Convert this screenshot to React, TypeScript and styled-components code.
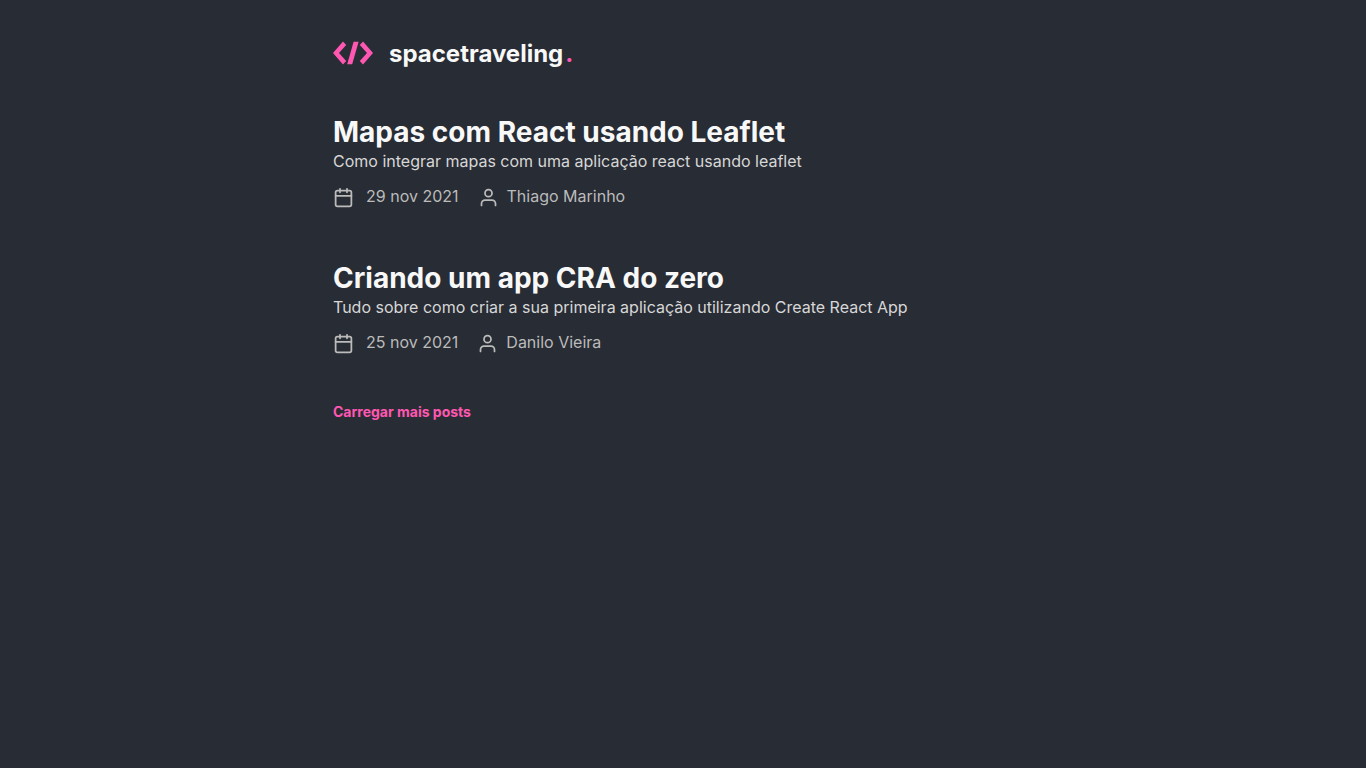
import React from 'react';
import styled, { createGlobalStyle } from 'styled-components';
import { FiCalendar, FiUser } from 'react-icons/fi';

const GlobalStyle = createGlobalStyle`
  * { margin: 0; padding: 0; box-sizing: border-box; }
  body { background: #282c34; color: #f8f8f8; }
  body, button { font-family: Inter, sans-serif; }
`;

const Container = styled.div`
  max-width: 700px;
  margin: 0 auto;
`;

const Header = styled.header`
  padding: 40px 0 48px;
`;

const LogoLink = styled.a`
  display: flex;
  align-items: flex-start;
  gap: 16px;
  width: fit-content;
  color: #f8f8f8;
  text-decoration: none;
  font-size: 24px;
  line-height: 28px;
  height: 26px;
  font-weight: 700;
`;

const Brand = styled.span`
  display: flex;
  gap: 2px;
`;

const Dot = styled.span`
  color: #ff57b2;
`;

const Posts = styled.div`
  display: flex;
  flex-direction: column;
  gap: 52px;
  margin-bottom: 48px;
`;

const Post = styled.a`
  display: block;
  color: #d7d7d7;
  text-decoration: none;
`;

const Title = styled.h1`
  color: #f8f8f8;
  font-size: 28px;
  line-height: 36px;
  font-weight: 700;
`;

const Subtitle = styled.p`
  font-size: 16px;
  line-height: 22px;
`;

const Info = styled.div`
  display: flex;
  gap: 19px;
  margin-top: 12px;
  color: #bbbbbb;
  font-size: 16px;
  line-height: 24px;
`;

const InfoItem = styled.span<{ $gap: number }>`
  display: flex;
  align-items: flex-end;
  gap: ${({ $gap }) => $gap}px;
`;

const LoadMore = styled.button`
  display: block;
  border: 0;
  background: none;
  color: #ff57b2;
  font-size: 14px;
  line-height: 20px;
  font-weight: 700;
  cursor: pointer;
`;

const posts = [
  { title: 'Mapas com React usando Leaflet', subtitle: 'Como integrar mapas com uma aplicação react usando leaflet', date: '29 nov 2021', author: 'Thiago Marinho' },
  { title: 'Criando um app CRA do zero', subtitle: 'Tudo sobre como criar a sua primeira aplicação utilizando Create React App', date: '25 nov 2021', author: 'Danilo Vieira' },
];

export default function App() {
  return (
    <>
      <GlobalStyle />
      <Container>
        <Header>
          <LogoLink href="#">
            <svg width="40" height="26" viewBox="0 0 40 26" fill="#ff57b2" aria-hidden="true">
              <path d="M10 1.5 13.2 5 6 13 13.2 21 10 24.5 0 13Z" />
              <path d="M30 1.5 26.8 5 34 13 26.8 21 30 24.5 40 13Z" />
              <path d="M20.6 1.8H25.6L19.2 24.3H14.2Z" />
            </svg>
            <Brand>spacetraveling<Dot>.</Dot></Brand>
          </LogoLink>
        </Header>
        <main>
          <Posts>
            {posts.map((post) => (
              <Post href="#" key={post.title}>
                <Title>{post.title}</Title>
                <Subtitle>{post.subtitle}</Subtitle>
                <Info>
                  <InfoItem $gap={12}><FiCalendar size={21} />{post.date}</InfoItem>
                  <InfoItem $gap={8}><FiUser size={21} />{post.author}</InfoItem>
                </Info>
              </Post>
            ))}
          </Posts>
          <LoadMore type="button">Carregar mais posts</LoadMore>
        </main>
      </Container>
    </>
  );
}
